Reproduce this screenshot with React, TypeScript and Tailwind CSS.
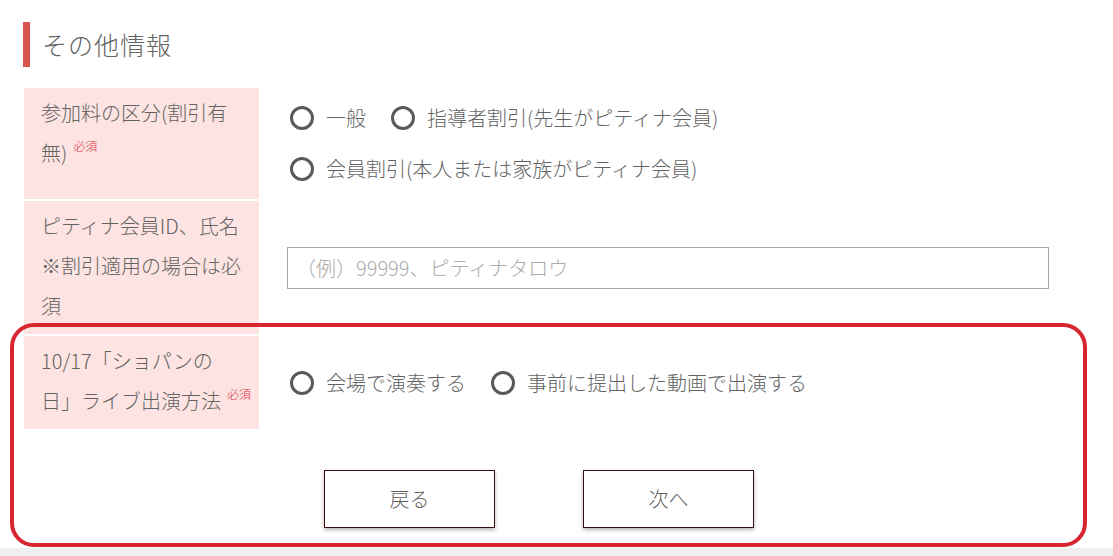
const font = { fontFamily: '"Noto Sans CJK JP", "Noto Sans", sans-serif' };

function Required() {
  return (
    <span className="inline-block align-top mt-[6px] ml-[6px] mr-[-16px] text-[12px] leading-[14px] text-[#d9334a]">必須</span>
  );
}

function Radio({ label }: { label: string }) {
  return (
    <label className="flex items-center gap-[12px] ml-[3px] h-[40px] cursor-pointer">
      <span className="block w-[24px] h-[24px] rounded-full border-[3px] border-[#5a5a5a] bg-white" />
      <span>{label}</span>
    </label>
  );
}

const labelCls =
  "bg-[#fde4e2] pl-[17px] pr-[16px] pt-[5px] pb-[8px] [text-spacing-trim:space-all]";

export default function App() {
  return (
    <div className="min-h-[556px] bg-[#efefef] text-[#636363] font-light" style={font}>
      <div className="bg-white pt-[22px] pb-[20px]">
        {/* 見出し */}
        <div className="ml-[23px] flex items-center h-[45px] border-l-[7px] border-[#d9534f] pl-[12px]">
          <h2 className="text-[25px] font-light tracking-[1px]">その他情報</h2>
        </div>

        {/* フォーム */}
        <div className="ml-[24px] mt-[21px] w-[1025px] flex flex-col gap-[2px] text-[20px] leading-[40px]">
          <div className="grid grid-cols-[235px_1fr]">
            <div className={labelCls}>
              参加料の区分(割引有無)
              <Required />
            </div>
            <div className="pl-[28px] py-[10px] flex flex-col gap-[11px]">
              <div className="flex gap-[22px]">
                <Radio label="一般" />
                <Radio label="指導者割引(先生がピティナ会員)" />
              </div>
              <Radio label="会員割引(本人または家族がピティナ会員)" />
            </div>
          </div>

          <div className="grid grid-cols-[235px_1fr]">
            <div className={labelCls}>ピティナ会員ID、氏名※割引適用の場合は必須</div>
            <div className="pl-[28px] flex items-center">
              <input
                type="text"
                placeholder="（例）99999、ピティナタロウ"
                className="w-full h-[42px] border border-[#a6a6a6] px-[8px] text-[20px] font-light text-[#555] placeholder:text-[#ababab] outline-none"
                style={font}
              />
            </div>
          </div>

          <div className="grid grid-cols-[235px_1fr]">
            <div className={labelCls}>
              10/17「ショパンの日」ライブ出演方法
              <Required />
            </div>
            <div className="pl-[28px] flex items-center gap-[22px]">
              <Radio label="会場で演奏する" />
              <Radio label="事前に提出した動画で出演する" />
            </div>
          </div>
        </div>

        {/* ボタン */}
        <div className="ml-[24px] w-[1025px] mt-[41px] flex justify-center gap-[88px] pl-[5px]">
          <button className="w-[171px] h-[58px] border border-[#3b0d0d] bg-white text-[20px] font-light text-[#5f5f5f] shadow-[0_2px_4px_rgba(0,0,0,0.3)]">
            戻る
          </button>
          <button className="w-[171px] h-[58px] border border-[#3b0d0d] bg-white text-[20px] font-light text-[#5f5f5f] shadow-[0_2px_4px_rgba(0,0,0,0.3)]">
            次へ
          </button>
        </div>
      </div>

      {/* 注釈の赤枠 */}
      <div className="absolute left-[10px] top-[323px] w-[1077px] h-[224px] rounded-[24px] border-[4px] border-[#d7262f] pointer-events-none" />
    </div>
  );
}
